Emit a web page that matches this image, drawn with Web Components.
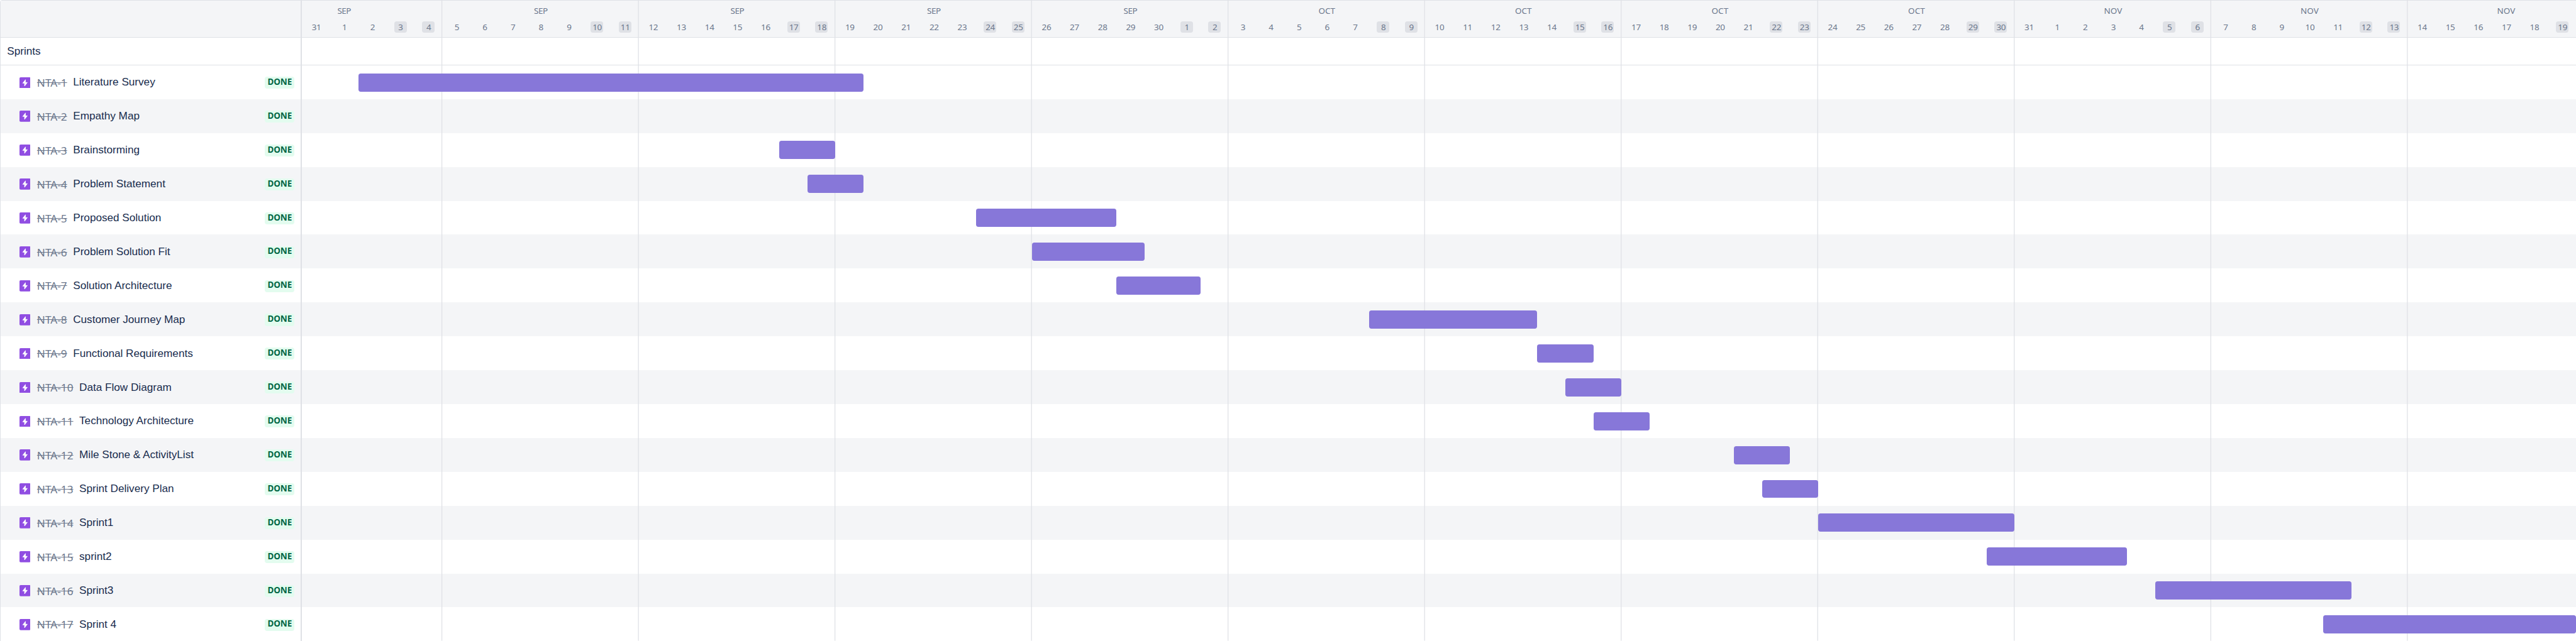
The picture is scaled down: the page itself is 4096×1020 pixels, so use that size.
<!DOCTYPE html>
<html lang="en">
<head>
<meta charset="utf-8">
<title>Roadmap</title>
<style>
html{font-size:9.8037px;background:#fff}
body{margin:0;overflow:hidden}
</style>
</head>
<body>
<road-map></road-map>
<script>
const TASKS=[
['NTA-1','Literature Survey',2,20],['NTA-2','Empathy Map'],['NTA-3','Brainstorming',17,19],['NTA-4','Problem Statement',18,20],
['NTA-5','Proposed Solution',24,29],['NTA-6','Problem Solution Fit',26,30],['NTA-7','Solution Architecture',29,32],
['NTA-8','Customer Journey Map',38,44],['NTA-9','Functional Requirements',44,46],['NTA-10','Data Flow Diagram',45,47],
['NTA-11','Technology Architecture',46,48],['NTA-12','Mile Stone & ActivityList',51,53],['NTA-13','Sprint Delivery Plan',52,54],
['NTA-14','Sprint1',54,61],['NTA-15','sprint2',60,65],['NTA-16','Sprint3',66,73],['NTA-17','Sprint 4',72,81]];
const esc=s=>s.replace(/&/g,'&amp;');
const define=(name,render)=>customElements.define(name,class extends HTMLElement{
  connectedCallback(){ if(!this.shadowRoot) this.attachShadow({mode:'open'}).innerHTML=render(this); }
});

define('epic-icon',()=>`<style>:host{display:block;width:1.8rem;height:1.8rem}svg{display:block;width:100%;height:100%}</style>
<svg viewBox="0 0 16 16"><rect width="16" height="16" rx="1.6" fill="#904ee2"/><path fill="#fff" stroke="#fff" stroke-width=".7" stroke-linejoin="round" d="M8.6 3.4 4.7 8.5H7.3V12.7L11.3 7.5H8.6Z"/></svg>`);

define('status-badge',()=>`<style>:host{display:flex;align-items:center;justify-content:center;box-sizing:border-box;padding-left:.12rem;width:4.8rem;height:1.95rem;border-radius:.375rem;background:#e3fcef;color:#006644;font:bold 1.375rem/1 "Noto Sans","Open Sans",sans-serif;letter-spacing:-.01rem}span{display:block;margin-top:-.2rem}</style><span><slot></slot></span>`);

define('side-row',()=>`<style>
:host{display:flex;align-items:center;box-sizing:border-box;height:5.5rem;padding:0 1.07rem 0 3.02rem}
:host([alt]){background:#f4f5f7}
.id{margin-left:1.08rem;margin-top:.18rem;font:1.75rem/2.4rem "Noto Sans","Open Sans",sans-serif;letter-spacing:.005rem;color:#6b778c;text-decoration:line-through}
.name{margin-left:.97rem;margin-top:.06rem;flex:1;font:1.75rem/2.4rem "Liberation Sans",Arial,sans-serif;color:#172b4d;white-space:nowrap}
status-badge{margin-top:.16rem}epic-icon{margin-top:.1rem}
</style><epic-icon></epic-icon><span class="id"><slot name="id"></slot></span><span class="name"><slot></slot></span><status-badge>DONE</status-badge>`);

define('day-label',()=>`<style>:host{display:flex;justify-content:center;width:4.554rem;flex:none}
span{display:block;box-sizing:border-box;padding-left:.1rem;width:2.05rem;height:1.85rem;border-radius:.375rem;text-align:center;font:1.375rem/1.92rem "Noto Sans","Open Sans",sans-serif;letter-spacing:-.03rem;color:#6b778c}
:host([off]) span{background:#dfe1e6}</style><span><slot></slot></span>`);

define('week-head',()=>`<style>:host{display:block;width:31.878rem;flex:none}
.m{text-align:center;font:1.375rem/2rem "Noto Sans","Open Sans",sans-serif;color:#6b778c;padding-top:.69rem;height:2.71rem}
:host([month="SEP"]) .m{letter-spacing:-.05rem}
.d{display:flex;justify-content:flex-end}:host([last]) .d{justify-content:flex-start}</style>
<div class="m"><slot name="month"></slot></div><div class="d"><slot></slot></div>`);

define('time-row',el=>`<style>:host{display:grid;grid-template-columns:repeat(81,4.554rem);height:5.5rem;align-items:start}
:host([alt]){background:#f4f5f7}
div{position:relative;z-index:1;height:2.95rem;margin-top:1.3rem;border-radius:.375rem;background:#8777d9}</style>
${el.hasAttribute('from')?`<div style="grid-column:${+el.getAttribute('from')+1}/${+el.getAttribute('to')+1}"></div>`:''}`);

define('week-lines',()=>{let r='';for(let k=0;k<11;k++)r+=`<rect x="${(5+7*k)*45.54-1.3}" y="1" width="1.3" height="1039" fill="#dfe1e6"/>`;
return `<style>:host{position:absolute;inset:0;display:block;pointer-events:none}svg{display:block;width:368.87rem;height:104rem}</style><svg viewBox="0 0 3688.7 1040">${r}</svg>`});

define('road-map',()=>{
  let weeks='',day=new Date(Date.UTC(2022,7,31)),names=['SEP','SEP','SEP','SEP','SEP','OCT','OCT','OCT','OCT','NOV','NOV','NOV'];
  names.forEach((m,i)=>{let n=i==0?5:i==11?6:7,d='';
    while(n--){const w=day.getUTCDay();d+=`<day-label${w==0||w==6?' off':''}>${day.getUTCDate()}</day-label>`;day.setUTCDate(day.getUTCDate()+1)}
    weeks+=`<week-head month="${m}"${i==11?' last':''}><span slot="month">${m}</span>${d}</week-head>`});
  return `<style>
:host{display:flex;width:100vw;height:100vh;overflow:hidden;background:#fff}
.side{box-sizing:border-box;width:48.99rem;flex:none;border-left:1px solid #dfe1e6;border-right:2px solid #dfe1e6;border-top-left-radius:.4rem;overflow:hidden}
.time{position:relative;flex:1;min-width:0;overflow:hidden}
.head{box-sizing:border-box;height:6.1rem;border-top:1px solid #dfe1e6;border-bottom:1px solid #dfe1e6;background:#f4f5f7;display:flex}
.time .head>week-head:first-child{margin-left:-9.108rem}
.group{box-sizing:border-box;height:4.5rem;border-bottom:1px solid #dfe1e6;padding:1rem 0 0 1.05rem;font:1.75rem/2.4rem "Liberation Sans",Arial,sans-serif;color:#172b4d}
</style>
<div class="side"><div class="head"></div><div class="group">Sprints</div>
${TASKS.map((t,i)=>`<side-row${i%2?' alt':''}><span slot="id">${t[0]}</span>${esc(t[1])}</side-row>`).join('')}</div>
<div class="time"><div class="head">${weeks}</div><div class="group"></div>
${TASKS.map((t,i)=>`<time-row${i%2?' alt':''}${t[2]?` from="${t[2]}" to="${t[3]}"`:''}></time-row>`).join('')}
<week-lines></week-lines></div>`});
</script>
</body>
</html>
